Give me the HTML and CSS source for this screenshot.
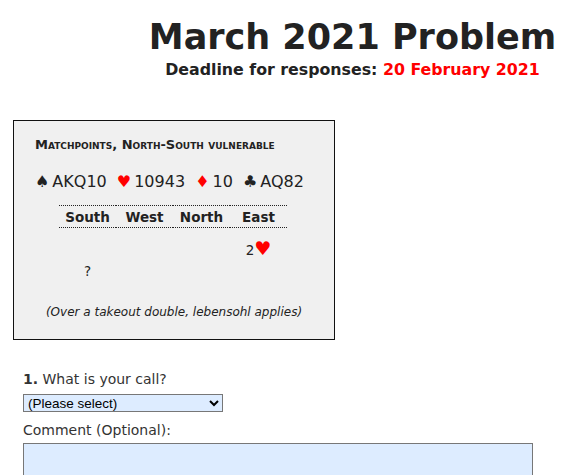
FILE: index.html
```html
<!DOCTYPE html>
<html lang="en">
<head>
  <meta charset="UTF-8">
  <meta name="viewport" content="width=device-width, initial-scale=1.0">
  <title>March 2021 Problem</title>
  <link rel="stylesheet" href="styles.css">
</head>
<body>
  <div class="header">
    <h1>March 2021 Problem</h1>
    <div class="deadline">Deadline for responses: <span class="red">20 February 2021</span></div>
  </div>

  <div class="problem">
    <div class="conditions">Matchpoints, North-South vulnerable</div>
    <div class="hand">
      <span class="holding"><span class="suit">&spades;</span>AKQ10</span>
      <span class="holding"><span class="suit red">&hearts;</span>10943</span>
      <span class="holding"><span class="suit red">&diams;</span>10</span>
      <span class="holding"><span class="suit">&clubs;</span>AQ82</span>
    </div>
    <table class="auction">
      <tr>
        <th>South</th>
        <th>West</th>
        <th>North</th>
        <th>East</th>
      </tr>
      <tr class="first-round">
        <td></td>
        <td></td>
        <td></td>
        <td>2<span class="bid-heart">&hearts;</span></td>
      </tr>
      <tr>
        <td>?</td>
        <td></td>
        <td></td>
        <td></td>
      </tr>
    </table>
    <div class="note">(Over a takeout double, lebensohl applies)</div>
  </div>

  <form class="answers">
    <div class="question"><b>1.</b> What is your call?</div>
    <select class="call">
      <option>(Please select)</option>
      <option>Pass</option>
      <option>Double</option>
      <option>2NT</option>
      <option>3NT</option>
    </select>
    <label class="comment-label" for="comment">Comment (Optional):</label>
    <textarea id="comment" class="comment"></textarea>
  </form>
</body>
</html>
```

FILE: styles.css
```css
body {
  margin: 0;
  font-family: "DejaVu Sans", Verdana, sans-serif;
  color: #222;
  background-color: #fff;
}
.red {
  color: #ff0000;
}
.header {
  padding-left: 134px;
  text-align: center;
  padding-top: 15px;
}
h1 {
  margin: 0;
  font-size: 35px;
  line-height: 44px;
  font-weight: bold;
}
.deadline {
  font-size: 15.8px;
  font-weight: bold;
  line-height: 22px;
}
.problem {
  margin: 39px 0 0 13px;
  width: 320px;
  height: 218px;
  border: 1px solid #111;
  background-color: #f0f0f0;
}
.conditions {
  margin: 16px 0 0 21px;
  font-size: 13px;
  font-weight: bold;
  font-variant: small-caps;
  line-height: 16px;
}
.hand {
  margin: 18px 0 0 21px;
  font-size: 16px;
  line-height: 22px;
  word-spacing: 5px;
}
.suit {
  font-size: 16px;
  margin-right: 3px;
}
.auction {
  margin: 12px 0 0 45px;
  border-collapse: collapse;
  font-size: 13.5px;
}
.auction th {
  width: 57px;
  height: 21px;
  padding: 0;
  border-top: 1px dotted #222;
  border-bottom: 1px dotted #222;
  text-align: center;
}
.auction td {
  height: 22px;
  padding: 0;
  text-align: center;
}
.auction .first-round td {
  height: 24px;
  padding-top: 8px;
}
.bid-heart {
  color: #ff0000;
  font-size: 19px;
}
.note {
  margin-top: 23px;
  text-align: center;
  font-style: italic;
  font-size: 12px;
}
.answers {
  margin: 30px 0 0 23px;
  color: #333;
}
.question {
  font-size: 14px;
  line-height: 18px;
}
.call {
  display: block;
  margin-top: 6px;
  width: 200px;
  height: 18px;
  padding: 0;
  font-family: "Liberation Sans", Arial, sans-serif;
  font-size: 13.5px;
  border: 1px solid #777;
  border-radius: 0;
  background-color: #ddecff;
}
.comment-label {
  display: block;
  margin-top: 9px;
  font-size: 14px;
  line-height: 18px;
}
.comment {
  display: block;
  margin-top: 4px;
  width: 510px;
  height: 60px;
  border: 1px solid #777;
  background-color: #ddecff;
  box-sizing: border-box;
}
```
